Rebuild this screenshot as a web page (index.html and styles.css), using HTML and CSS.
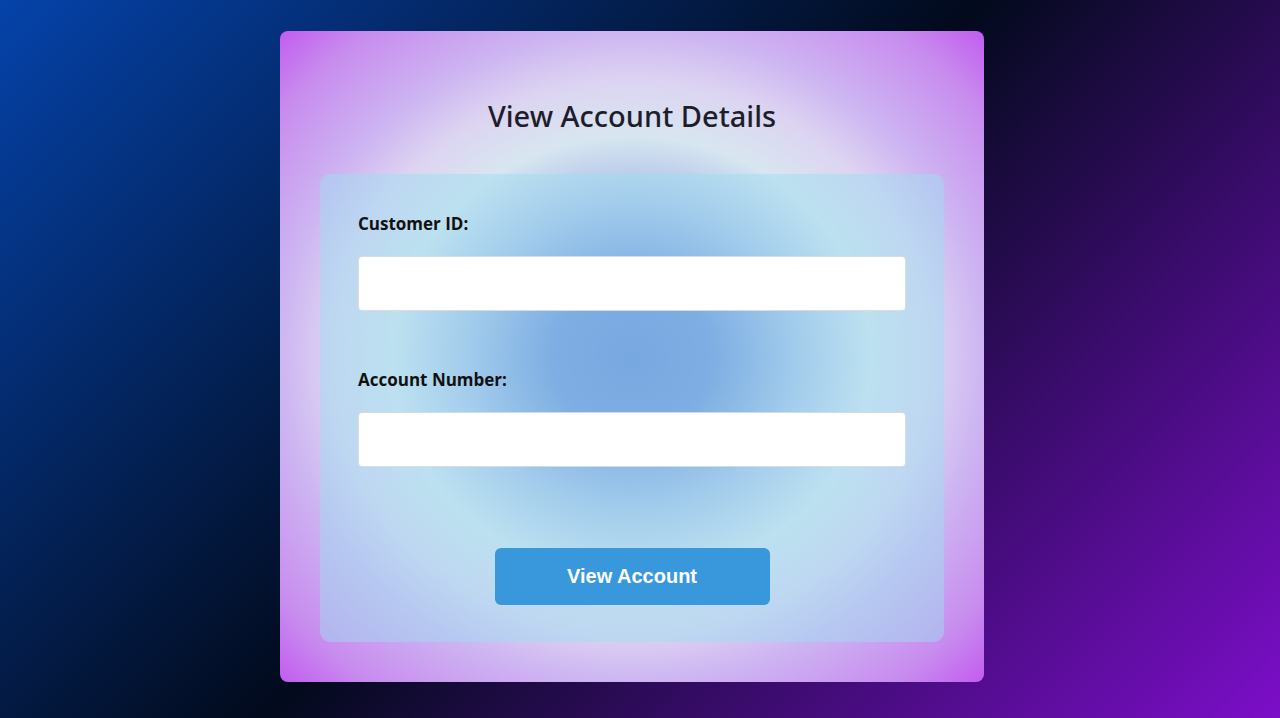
FILE: index.html
```html
<!DOCTYPE html>
<html lang="en">
<head>
<meta charset="utf-8">
<title>View Account Details</title>
<link rel="stylesheet" href="styles.css">
</head>
<body>
<main class="page">
  <section class="card">
    <h1 class="title">View Account Details</h1>
    <form class="form-box">
      <label class="label" for="cid">Customer ID:</label>
      <input class="field" id="cid" type="text">
      <label class="label label-second" for="acc">Account Number:</label>
      <input class="field" id="acc" type="text">
      <div class="actions">
        <button class="btn" type="button">View Account</button>
      </div>
    </form>
  </section>
</main>
</body>
</html>
```

FILE: styles.css
```css
* { box-sizing: border-box; }
html, body { margin: 0; padding: 0; height: 100%; }
body {
  background: linear-gradient(135deg, #0543aa 0%, #020a1c 49%, #7c0ec9 100%);
  font-family: "Open Sans", "Noto Sans", sans-serif;
  overflow: hidden;
}
.page {
  display: flex;
  justify-content: center;
  padding: 31px 16px 0 0;
  height: 100%;
}
.card {
  width: 704px;
  height: 651px;
  border-radius: 8px;
  padding: 40px;
  background: radial-gradient(ellipse at center, #5074d0 0%, #5c80d6 16%, #a4bce8 33%, #d8e6f0 48%, #dcd4f2 60%, #cdb4f2 71%, #c88cee 88%, #c25cf0 100%);
  display: flex;
  flex-direction: column;
}
.title {
  margin: 27px 0 41px;
  height: 35px;
  line-height: 35px;
  text-align: center;
  font-family: "Noto Sans", "Open Sans", sans-serif;
  font-size: 29px;
  font-weight: 500;
  color: #1e1e2a;
}
.form-box {
  margin: 0;
  height: 468px;
  border-radius: 10px;
  padding: 38px 38px 37px;
  background: rgba(160, 220, 240, 0.5);
  display: flex;
  flex-direction: column;
}
.label {
  display: block;
  height: 24px;
  line-height: 24px;
  font-size: 17px;
  font-weight: 700;
  color: #111;
}
.label-second { margin-top: 57px; }
.field {
  margin-top: 20px;
  height: 55px;
  width: 100%;
  background: #fff;
  border: 1px solid #d6dce4;
  border-radius: 4px;
  padding: 0 12px;
  font-size: 16px;
}
.actions {
  display: flex;
  justify-content: center;
  margin-top: 81px;
}
.btn {
  width: 275px;
  height: 57px;
  border: none;
  border-radius: 6px;
  background: #3898db;
  color: #fff;
  font-family: "Liberation Sans", Arial, sans-serif;
  font-weight: 700;
  font-size: 20px;
}
```
